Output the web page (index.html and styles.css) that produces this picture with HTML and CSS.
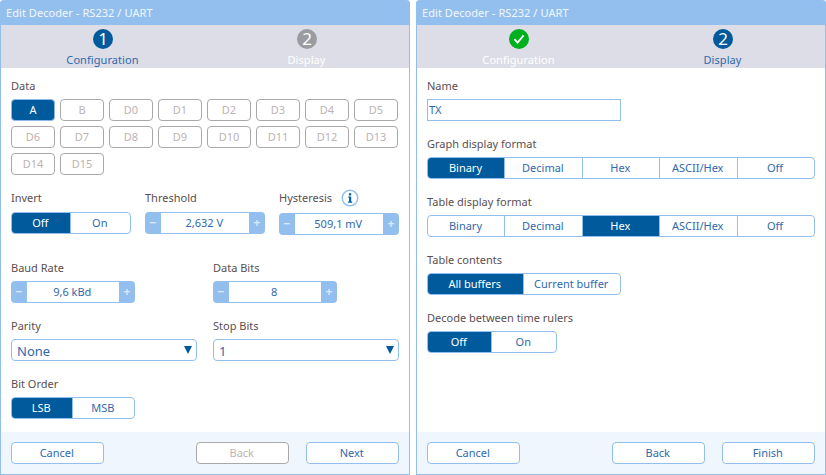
FILE: index.html
```html
<!DOCTYPE html>
<html lang="en">
<head>
<meta charset="utf-8">
<title>Edit Decoder</title>
<link rel="stylesheet" href="styles.css">
</head>
<body>
<div class="page">
  <section class="win">
    <header class="title">Edit Decoder - RS232 / UART</header>
    <nav class="steps">
      <div class="step current"><span class="badge">1</span><span class="step-name">Configuration</span></div>
      <div class="step pending"><span class="badge">2</span><span class="step-name">Display</span></div>
    </nav>
    <main class="body">
      <div class="label l-data">Data</div>
      <div class="chips">
        <span class="chip on">A</span><span class="chip">B</span><span class="chip">D0</span><span class="chip">D1</span><span class="chip">D2</span><span class="chip">D3</span><span class="chip">D4</span><span class="chip">D5</span>
        <span class="chip">D6</span><span class="chip">D7</span><span class="chip">D8</span><span class="chip">D9</span><span class="chip">D10</span><span class="chip">D11</span><span class="chip">D12</span><span class="chip">D13</span>
        <span class="chip">D14</span><span class="chip">D15</span>
      </div>
      <div class="row3">
        <div class="field">
          <div class="label">Invert</div>
          <div class="seg w120"><span class="on s59">Off</span><span class="grow">On</span></div>
        </div>
        <div class="field">
          <div class="label">Threshold</div>
          <div class="stepper w120"><span class="pm">−</span><span class="val">2,632 V</span><span class="pm">+</span></div>
        </div>
        <div class="field">
          <div class="label hyst">Hysteresis
            <svg class="info" viewBox="0 0 18 18" width="18" height="18" aria-hidden="true"><circle cx="9" cy="9" r="7.8" fill="#fff" stroke="#93bfee" stroke-width="1.5"/><rect x="7.9" y="4.2" width="2.3" height="2.2" fill="#005a9b"/><path d="M7.3 7.6h2.9v5h1v1.2H7.1v-1.2h1V8.8h-.8z" fill="#005a9b"/></svg>
          </div>
          <div class="stepper w120"><span class="pm">−</span><span class="val">509,1 mV</span><span class="pm">+</span></div>
        </div>
      </div>
      <div class="row2 r-baud">
        <div class="field col"><div class="label">Baud Rate</div>
          <div class="stepper w124"><span class="pm">−</span><span class="val">9,6 kBd</span><span class="pm">+</span></div></div>
        <div class="field col"><div class="label">Data Bits</div>
          <div class="stepper w124"><span class="pm">−</span><span class="val">8</span><span class="pm">+</span></div></div>
      </div>
      <div class="row2 r-parity">
        <div class="field col"><div class="label">Parity</div>
          <div class="select"><span>None</span><i class="arrow"></i></div></div>
        <div class="field col"><div class="label">Stop Bits</div>
          <div class="select"><span>1</span><i class="arrow"></i></div></div>
      </div>
      <div class="field r-bit">
        <div class="label">Bit Order</div>
        <div class="seg w124"><span class="on s61">LSB</span><span class="grow">MSB</span></div>
      </div>
    </main>
    <footer class="foot">
      <span class="btn">Cancel</span><span class="spacer"></span><span class="btn off">Back</span><span class="btn">Next</span>
    </footer>
  </section>

  <section class="win">
    <header class="title">Edit Decoder - RS232 / UART</header>
    <nav class="steps">
      <div class="step done"><span class="badge"><svg viewBox="0 0 20 20" width="20" height="20" aria-hidden="true"><path d="M5.4 10.2l3.2 3.4 6-7.2" fill="none" stroke="#fff" stroke-width="1.7"/></svg></span><span class="step-name">Configuration</span></div>
      <div class="step current"><span class="badge">2</span><span class="step-name">Display</span></div>
    </nav>
    <main class="body">
      <div class="label l-data">Name</div>
      <div class="input">TX</div>
      <div class="block">
        <div class="label">Graph display format</div>
        <div class="seg w388"><span class="on">Binary</span><span>Decimal</span><span>Hex</span><span>ASCII/Hex</span><span>Off</span></div>
      </div>
      <div class="block">
        <div class="label">Table display format</div>
        <div class="seg w388"><span>Binary</span><span>Decimal</span><span class="on">Hex</span><span>ASCII/Hex</span><span>Off</span></div>
      </div>
      <div class="block">
        <div class="label">Table contents</div>
        <div class="seg w194"><span class="on s96">All buffers</span><span class="grow">Current buffer</span></div>
      </div>
      <div class="block">
        <div class="label">Decode between time rulers</div>
        <div class="seg w130"><span class="on s64">Off</span><span class="grow">On</span></div>
      </div>
    </main>
    <footer class="foot">
      <span class="btn">Cancel</span><span class="spacer"></span><span class="btn">Back</span><span class="btn">Finish</span>
    </footer>
  </section>
</div>
</body>
</html>
```

FILE: styles.css
```css
* { box-sizing: border-box; }
html, body { margin: 0; padding: 0; background: #fff; }
body { font-family: "Noto Sans", "Open Sans", sans-serif; font-size: 11px; color: #5b4f4f; width: 826px; height: 475px; overflow: hidden; }
.page { display: flex; gap: 6px; height: 475px; }
.win { width: 410px; height: 475px; display: flex; flex-direction: column; border: 1px solid #93bfee; border-top: 0; border-radius: 4px 4px 0 0; background: #fff; }
.title { height: 25px; margin: 0 -1px; padding: 0 0 0 6px; background: #93bfee; color: #f2f7fd; font-size: 11px; letter-spacing: .06px; line-height: 25px; border-radius: 4px 4px 0 0; white-space: nowrap; }
.steps { height: 43px; display: flex; background: #dddde7; }
.step { width: 204px; display: flex; flex-direction: column; align-items: center; padding-top: 4px; }
.badge { width: 20px; height: 20px; border-radius: 50%; color: #fff; font-size: 17px; line-height: 20px; text-align: center; display: block; }
.badge svg { display: block; }
.step-name { margin-top: 3px; padding-right: 1px; font-size: 11px; letter-spacing: .07px; line-height: 16px; color: #fff; }
.current .badge { background: #005a9b; }
.current .step-name { color: #2f69ad; }
.pending .badge { background: #9b9ca1; }
.done .badge { background: #00b01e; }
.body { flex: 1; padding: 10px 10px 0; min-height: 0; }
.label { height: 15px; line-height: 15px; font-size: 11px; color: #5b4f4f; white-space: nowrap; }
.l-data { margin-bottom: 6px; }
.chips { display: grid; grid-template-columns: repeat(8, 44px); gap: 5px; grid-auto-rows: 22px; }
.chip { height: 22px; border: 1px solid #a9a9a9; border-radius: 4px; color: #bdb3b3; text-align: center; line-height: 20px; font-size: 11px; background: #fff; }
.chip.on { background: #005a9b; border-color: #8fb8e6; color: #fff; }
.row3 { display: flex; gap: 14px; margin-top: 15px; }
.field .label { margin-bottom: 6px; }
.row3 .field .label { margin-bottom: 7px; }
.hyst { display: flex; align-items: center; gap: 9px; }
.row3 .field:last-child .label { margin-bottom: 8px; }
.info { flex: none; margin-top: 1px; }
.row3 .field { width: 120px; }
.row2 { display: flex; }
.col { flex: none; width: 202px; }
.col:last-child { width: 186px; }
.r-baud { margin-top: 25px; }
.r-parity { margin-top: 15px; }
.r-bit { margin-top: 15px; }
.seg { display: flex; height: 22px; border: 1px solid #93bfee; border-radius: 4px; overflow: hidden; background: #fff; color: #2f69ad; font-size: 11px; line-height: 20px; text-align: center; }
.seg span { flex: 1 1 0; padding-right: 1.5px; border-left: 1px solid #93bfee; white-space: nowrap; }
.seg span:first-child { border-left: 0; }
.seg .on { background: #005a9b; color: #fff; }
.seg .s59, .seg .s61, .seg .s96, .seg .s64 { flex: none; }
.seg .s59 { width: 58px; }
.seg .s61 { width: 60px; }
.seg .s96 { width: 95px; }
.seg .s64 { width: 63px; }
.w120 { width: 120px; }
.w124 { width: 124px; }
.w130 { width: 130px; }
.w194 { width: 194px; }
.w388 { width: 388px; }
.stepper { display: flex; height: 22px; background: #93bfee; border-radius: 4px; padding: 1px 0; color: #2f69ad; }
.pm { width: 16px; text-align: center; color: #dce9f8; font-weight: 700; font-size: 12px; line-height: 20px; }
.val { flex: 1; padding-right: 1.5px; background: #fff; text-align: center; line-height: 20px; font-size: 11px; }
.select { width: 186px; height: 22px; display: flex; align-items: center; justify-content: space-between; padding: 0 4px 0 5px; border: 1px solid #93bfee; border-radius: 4px; color: #2f69ad; font-size: 13px; }
.select span { position: relative; top: 1px; }
.arrow { width: 0; height: 0; border-left: 4.5px solid transparent; border-right: 4.5px solid transparent; border-top: 8px solid #005a9b; }
.input { width: 194px; height: 22px; border: 1px solid #93bfee; padding-left: 1px; line-height: 20px; color: #2f69ad; font-size: 11px; }
.block { margin-top: 15px; }
.block .label { margin-bottom: 6px; }
.foot { height: 42px; display: flex; gap: 17px; align-items: center; padding: 0 10px; background: #eff6fd; }
.spacer { flex: 1; }
.btn { width: 93px; height: 22px; padding-right: 1.5px; border: 1px solid #93bfee; border-radius: 4px; background: #fff; color: #2f69ad; text-align: center; line-height: 20px; font-size: 11px; }
.btn.off { border-color: #a9a9a9; color: #bdb3b3; }
```
